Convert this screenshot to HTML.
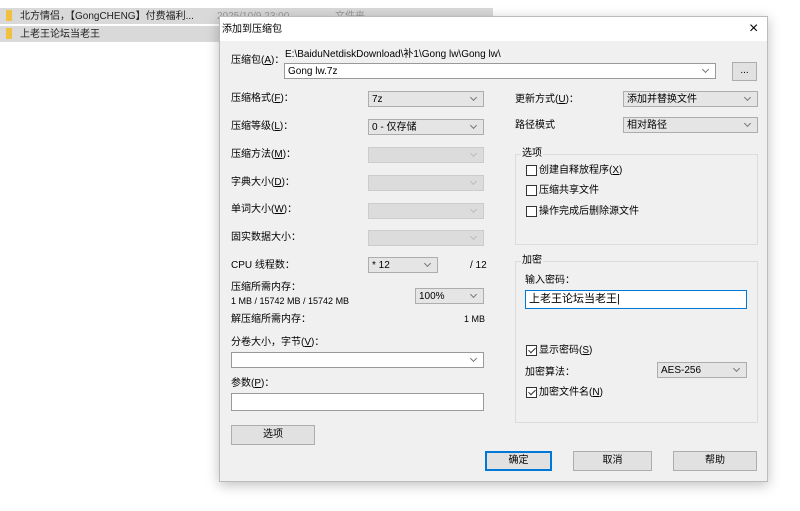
<!DOCTYPE html>
<html><head><meta charset="utf-8"><style>
*{margin:0;padding:0;box-sizing:border-box}
body{width:800px;height:511px;background:#fff;position:relative;overflow:hidden;font-family:"Liberation Sans","Noto Sans CJK SC",sans-serif;font-size:10px;color:#000}
.a{position:absolute;white-space:nowrap;line-height:11px}
.row{position:absolute;left:0;width:493px;height:16px;background:#d9d9d9}
.fold{position:absolute;width:6px;height:11px;background:#f0c040;border-radius:1px}
.dlg{position:absolute;left:219px;top:16px;width:549px;height:466px;background:#f0f0f0;border:1px solid #bbb;box-shadow:0 3px 12px rgba(0,0,0,.25)}
.tb{position:absolute;left:0;top:0;width:100%;height:24px;background:#fff}
.cb{position:absolute;height:16px;background:#e5e5e5;border:1px solid #adadad;padding-left:3px;padding-top:2px;line-height:11px}
.cb.dis{background:#dcdcdc;border-color:#ccc}
.cb:after{content:"";position:absolute;right:7px;top:3px;width:4px;height:4px;border-right:1px solid #777;border-bottom:1px solid #777;transform:rotate(45deg)}
.cb.dis:after{border-color:#bbb}
.cb.w{background:#fff;border-color:#999}
.in{position:absolute;background:#fff;border:1px solid #999;padding-left:3px}
.btn{position:absolute;height:20px;background:#e1e1e1;border:1px solid #adadad;text-align:center;line-height:18px}
.grp{position:absolute;border:1px solid #dcdcdc}
.chk{position:absolute;width:11px;height:11px;border:1px solid #333;background:#fff}
.chk.on:after{content:"";position:absolute;left:3px;top:0;width:3px;height:6px;border-right:1px solid #333;border-bottom:1px solid #333;transform:rotate(45deg)}
u{text-decoration:underline}
</style></head><body>
<div class="row" style="top:8px"></div>
<div class="row" style="top:26px"></div>
<div class="fold" style="left:6px;top:10px"></div>
<div class="fold" style="left:6px;top:28px"></div>
<div class="a" style="left:20px;top:11px;color:#222">北方情侣，【GongCHENG】付费福利...</div>
<div class="a" style="left:217px;top:11px;color:#999">2025/10/9 23:00</div>
<div class="a" style="left:335px;top:11px;color:#999">文件夹</div>
<div class="a" style="left:20px;top:29px;color:#222">上老王论坛当老王</div>

<div class="dlg">
<div class="tb"></div>
<div class="a" style="left:2px;top:7px">添加到压缩包</div>
<div class="a" style="left:529px;top:4px;font-size:16px;line-height:16px">×</div>
<div class="a" style="left:11px;top:38px">压缩包(<u>A</u>)：</div>
<div class="a" style="left:65px;top:32px">E:\BaiduNetdiskDownload\补1\Gong lw\Gong lw\</div>
<div class="cb w" style="left:64px;top:46px;width:432px">Gong lw.7z</div>
<div class="btn" style="left:512px;top:45px;width:25px;height:19px;line-height:15px">...</div>

<div class="a" style="left:11px;top:76px">压缩格式(<u>F</u>)：</div>
<div class="cb" style="left:148px;top:74px;width:116px">7z</div>
<div class="a" style="left:11px;top:104px">压缩等级(<u>L</u>)：</div>
<div class="cb" style="left:148px;top:102px;width:116px">0 - 仅存储</div>
<div class="a" style="left:11px;top:132px">压缩方法(<u>M</u>)：</div>
<div class="cb dis" style="left:148px;top:130px;width:116px"></div>
<div class="a" style="left:11px;top:160px">字典大小(<u>D</u>)：</div>
<div class="cb dis" style="left:148px;top:158px;width:116px"></div>
<div class="a" style="left:11px;top:187px">单词大小(<u>W</u>)：</div>
<div class="cb dis" style="left:148px;top:186px;width:116px"></div>
<div class="a" style="left:11px;top:215px">固实数据大小：</div>
<div class="cb dis" style="left:148px;top:213px;width:116px"></div>
<div class="a" style="left:11px;top:243px">CPU 线程数：</div>
<div class="cb" style="left:148px;top:240px;width:70px">* 12</div>
<div class="a" style="left:250px;top:243px">/ 12</div>
<div class="a" style="left:11px;top:265px">压缩所需内存：</div>
<div class="a" style="left:11px;top:279px;font-size:9px">1 MB / 15742 MB / 15742 MB</div>
<div class="cb" style="left:195px;top:271px;width:69px">100%</div>
<div class="a" style="left:11px;top:297px">解压缩所需内存：</div>
<div class="a" style="left:244px;top:297px;font-size:9px">1 MB</div>
<div class="a" style="left:11px;top:320px">分卷大小，字节(<u>V</u>)：</div>
<div class="cb w" style="left:11px;top:335px;width:253px"></div>
<div class="a" style="left:11px;top:361px">参数(<u>P</u>)：</div>
<div class="in" style="left:11px;top:376px;width:253px;height:18px"></div>
<div class="btn" style="left:11px;top:408px;width:84px">选项</div>

<div class="a" style="left:295px;top:77px">更新方式(<u>U</u>)：</div>
<div class="cb" style="left:403px;top:74px;width:135px">添加并替换文件</div>
<div class="a" style="left:295px;top:103px">路径模式</div>
<div class="cb" style="left:403px;top:100px;width:135px">相对路径</div>
<div class="grp" style="left:295px;top:137px;width:243px;height:91px"></div>
<div class="a" style="left:301px;top:131px;background:#f0f0f0;padding:0 1px">选项</div>
<div class="chk" style="left:306px;top:148px"></div><div class="a" style="left:319px;top:148px">创建自释放程序(<u>X</u>)</div>
<div class="chk" style="left:306px;top:168px"></div><div class="a" style="left:319px;top:168px">压缩共享文件</div>
<div class="chk" style="left:306px;top:189px"></div><div class="a" style="left:319px;top:189px">操作完成后删除源文件</div>
<div class="grp" style="left:295px;top:244px;width:243px;height:162px"></div>
<div class="a" style="left:301px;top:238px;background:#f0f0f0;padding:0 1px">加密</div>
<div class="a" style="left:305px;top:258px">输入密码：</div>
<div class="in" style="left:305px;top:273px;width:222px;height:19px;border-color:#0078d7;line-height:16px;font-size:11px">上老王论坛当老王|</div>
<div class="chk on" style="left:306px;top:328px"></div><div class="a" style="left:319px;top:328px">显示密码(<u>S</u>)</div>
<div class="a" style="left:305px;top:350px">加密算法：</div>
<div class="cb" style="left:437px;top:345px;width:90px">AES-256</div>
<div class="chk on" style="left:306px;top:370px"></div><div class="a" style="left:319px;top:370px">加密文件名(<u>N</u>)</div>

<div class="btn" style="left:265px;top:434px;width:67px;border:1px solid #0078d7;box-shadow:inset 0 0 0 1px #0078d7">确定</div>
<div class="btn" style="left:353px;top:434px;width:79px">取消</div>
<div class="btn" style="left:453px;top:434px;width:84px">帮助</div>
</div>
</body></html>
